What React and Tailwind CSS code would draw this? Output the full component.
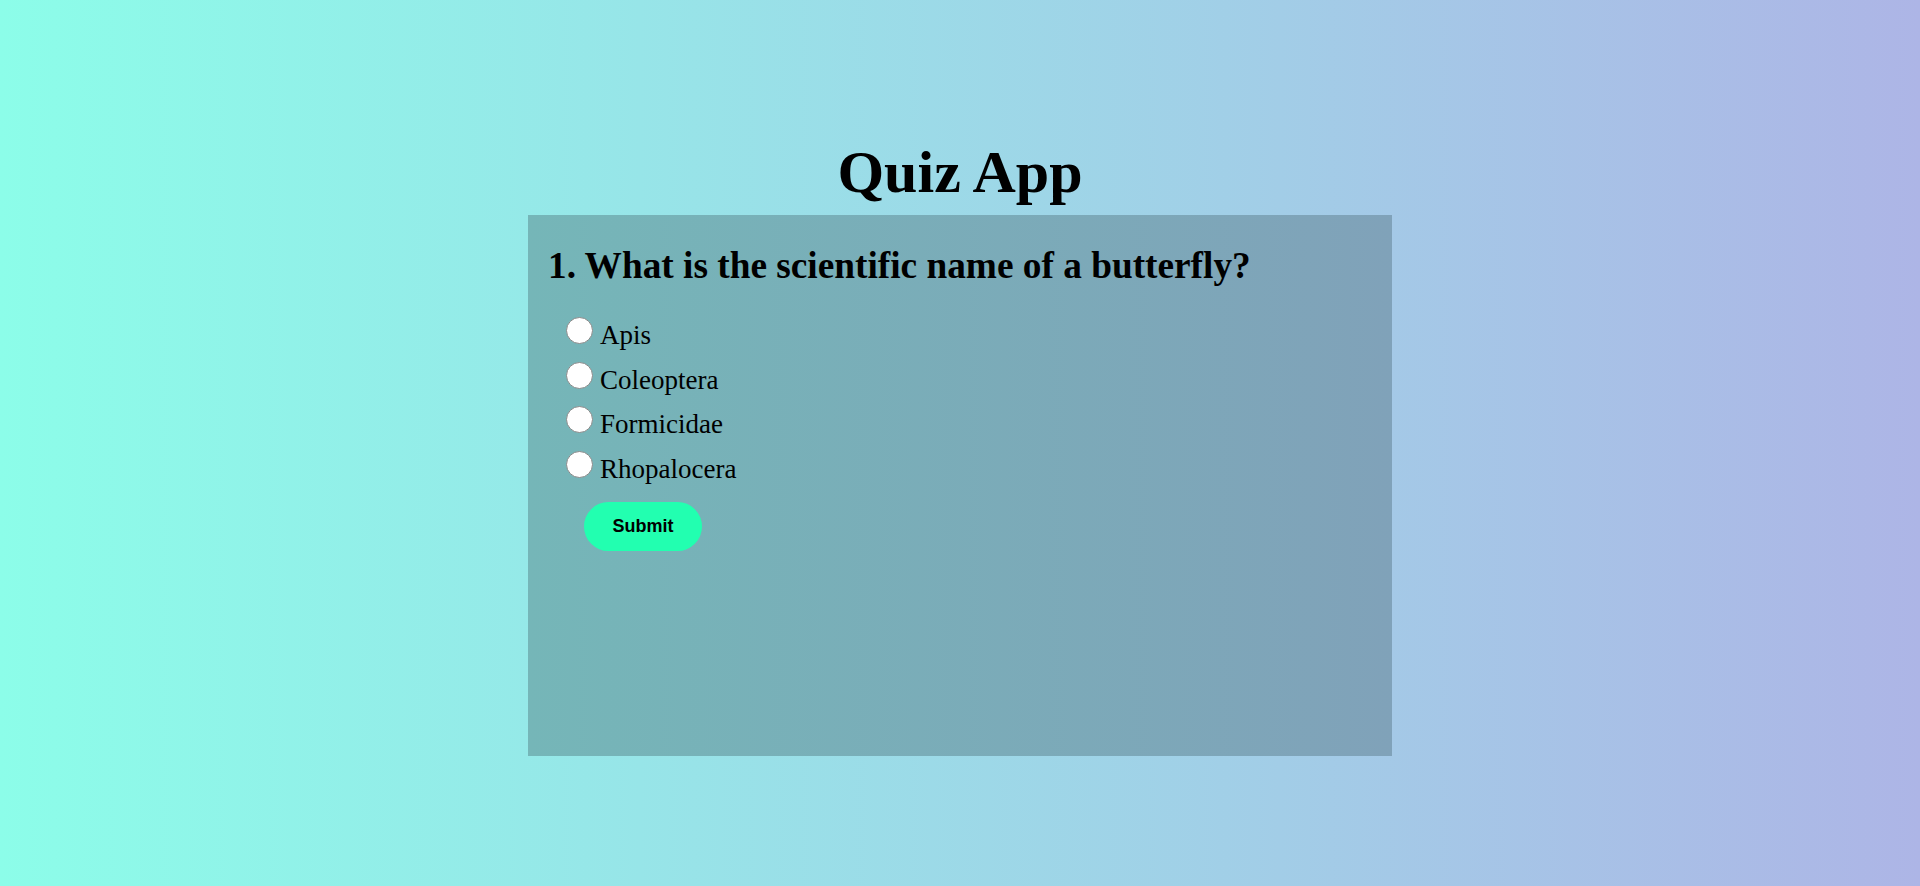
import React from "react";

const options = ["Apis", "Coleoptera", "Formicidae", "Rhopalocera"];

const App = () => {
  return (
    <div
      className="min-h-screen w-full bg-linear-to-r/srgb from-[#8cfde9] to-[#adb5e6] flex flex-col items-center pt-[138px]"
      style={{ fontFamily: '"Liberation Serif", "Times New Roman", serif' }}
    >
      <h1 className="text-[60px] leading-[68px] font-bold text-black">Quiz App</h1>
      <div className="mt-[9px] w-[864px] h-[541px] bg-linear-to-r/srgb from-[#75b6b8] to-[#80a2b9] px-[20px] pt-[29px]">
        <h2 className="text-[37.3px] leading-[44px] font-bold text-black">
          1. What is the scientific name of a butterfly?
        </h2>
        <div className="mt-[25px] pl-[18px]">
          {options.map((opt) => (
            <label key={opt} className="block text-[27px] leading-[44.5px] text-black cursor-pointer">
              <span className="inline-block w-[27px] h-[27px] rounded-full bg-white border border-[#8a8a8a] align-baseline mr-[7px]" />
              {opt}
            </label>
          ))}
        </div>
        <button
          className="mt-[11px] ml-[36px] w-[118px] h-[49px] rounded-full bg-[#22ffb0] text-[18px] font-bold text-black"
          style={{ fontFamily: '"Liberation Sans", Arial, sans-serif' }}
        >
          Submit
        </button>
      </div>
    </div>
  );
};

export default App;
